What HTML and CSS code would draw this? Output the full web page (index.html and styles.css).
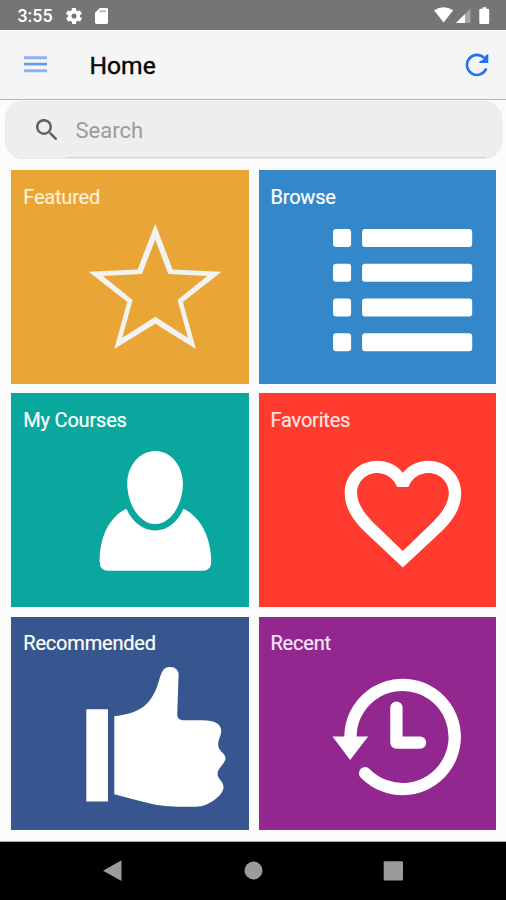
FILE: index.html
```html
<!DOCTYPE html>
<html lang="en">
<head>
<meta charset="utf-8">
<title>Home</title>
<link rel="stylesheet" href="styles.css">
</head>
<body>
<div class="status">
  <span class="time">3:55</span>
  <svg class="gear" viewBox="2 2 20 20"><path fill-rule="evenodd" d="M19.4 13a7 7 0 0 0 0-2l2.1-1.6a.5.5 0 0 0 .1-.7l-2-3.4a.5.5 0 0 0-.6-.2l-2.5 1a7 7 0 0 0-1.7-1l-.4-2.6a.5.5 0 0 0-.5-.5h-4a.5.5 0 0 0-.5.5L9 5.100a7 7 0 0 0-1.700 1l-2.500-1a.5.5 0 0 0-.6.200l-2 3.400a.5.5 0 0 0 .1.700L4.600 11a7 7 0 0 0 0 2l-2.100 1.600a.5.5 0 0 0-.1.700l2 3.400a.5.5 0 0 0 .6.200l2.500-1a7 7 0 0 0 1.700 1l.4 2.600a.5.5 0 0 0 .5.500h4a.5.5 0 0 0 .5-.5l.4-2.600a7 7 0 0 0 1.700-1l2.500 1a.5.5 0 0 0 .6-.2l2-3.400a.5.5 0 0 0-.1-.7zM12 15.200a3.200 3.200 0 1 1 0-6.400 3.200 3.200 0 0 1 0 6.400z"/></svg>
  <svg class="card" viewBox="0 0 13 16"><path d="M4.800 0H11.600Q13 0 13 1.400V14.600Q13 16 11.600 16H1.400Q0 16 0 14.600V4.800z"/><path fill="#c4c4c4" d="M4.500 2h6.500v2.300h-6.500z"/></svg>
  <svg class="signals" viewBox="0 0 56 17">
    <path d="M0 3.300Q9.600-3 19.200 3.300L9.600 15.500z"/>
    <path opacity=".35" d="M36.500 1.500V16H22z"/>
    <path d="M31 7V16H22z"/>
    <path d="M47.500 1.700h1.200V.3h3.600v1.400h1.700q1.200 0 1.200 1.200v12.900q0 1.200-1.200 1.200h-7.500q-1.200 0-1.200-1.200V2.900q0-1.200 1.200-1.200z"/>
  </svg>
</div>
<header class="bar">
  <svg class="menu" viewBox="0 0 23 17"><path fill="#8eb2f4" d="M0 .2h23v3H0zM0 13.300h23v3H0z"/><path fill="#5c9cf0" d="M0 6.800h23v2.600H0z"/></svg>
  <h1>Home</h1>
  <svg class="refresh" viewBox="0 0 24 24"><path fill="none" stroke="#236ff5" stroke-width="2.600" d="M21.300 15.500A10 10 0 1 1 19.300 5.100"/><path fill="#236ff5" d="M23.300 1v9H14.300V8.400L18.500 6.500 20.500 2.500z"/></svg>
</header>
<main>
  <div class="search">
    <svg class="lens" viewBox="3 3 17.500 17.500"><path d="M15.500 14h-.8l-.3-.3A6.500 6.500 0 1 0 13.700 14.400l.3.3v.8l5 5 1.500-1.500zm-6 0a4.500 4.500 0 1 1 0-9 4.500 4.500 0 0 1 0 9z"/></svg>
    <span class="hint">Search</span>
  </div>
  <div class="tiles">
    <a class="tile featured"><span>Featured</span>
      <svg viewBox="34 16 712 640"><path fill="#f2f2f2" fill-rule="evenodd" d="M467 177L519 314 666 321 550 412 589 553 467 477 344 553 383 412 267 321 414 314zM467 224L427 328 310 334 399 406 368 519 467 456 565 519 534 406 623 334 506 328z"/></svg></a>
    <a class="tile browse"><span>Browse</span>
      <svg viewBox="17 16 711 640"><g fill="#fff"><rect x="239" y="193" width="54" height="54" rx="9"/><rect x="326" y="193" width="330" height="54" rx="9"/><rect x="239" y="297" width="54" height="54" rx="9"/><rect x="326" y="297" width="330" height="54" rx="9"/><rect x="239" y="401" width="54" height="54" rx="9"/><rect x="326" y="401" width="330" height="54" rx="9"/><rect x="239" y="505" width="54" height="54" rx="9"/><rect x="326" y="505" width="330" height="54" rx="9"/></g></svg></a>
    <a class="tile courses"><span>My Courses</span>
      <svg viewBox="33 15 712 640"><path fill="#fff" d="M466 189C513 189 549 233 549 287C549 348 513 408 466 408S382 348 382 287C382 233 419 189 466 189zM379 362C398 402 428 427 466 427S532 402 551 362C605 388 634 453 634 520Q634 548 608 548H325Q299 548 299 520C299 451 325 388 379 362z"/></svg></a>
    <a class="tile favorites"><span>Favorites</span>
      <svg viewBox="18 16 711 640"><path fill="#fff" fill-rule="evenodd" d="M449 255C468 231 497 219 526 219C580 219 624 262 624 315C624 360 602 394 567 429L449 539 332 429C297 393 275 360 275 315C275 262 318 219 372 219C402 219 431 231 449 255zM432 298C421 271 398 256 372 256C338 256 312 283 312 316C312 346 332 374 358 402L449 490 540 402C567 374 587 346 587 316C587 283 560 256 526 256C499 256 476 271 466 298z"/></svg></a>
    <a class="tile recommended"><span>Recommended</span>
      <svg viewBox="33 14 712 641"><path fill="#fff" d="M259 291H324V568H259zM343 312C410 305 446 285 468 232C477 209 480 192 486 180Q493 164 511 164Q536 165 536 188L532 307Q532 324 550 324H607C646 324 665 336 664 356C663 375 654 382 655 398C656 418 677 422 677 438C677 453 653 468 653 485C653 499 671 507 671 525C671 549 628 578 603 582C577 586 500 584 463 577Q410 564 343 546z"/></svg></a>
    <a class="tile recent"><span>Recent</span>
      <svg viewBox="18 15 711 641"><path fill="none" stroke="#fff" stroke-width="37" stroke-linecap="round" stroke-linejoin="round" d="M292 385V374A156.500 156.500 0 1 1 336 484M430 287V392H501"/><path fill="#fff" d="M238 374H345L291 444z"/></svg></a>
  </div>
</main>
<nav>
  <svg viewBox="0 0 506 58"><g fill="#9b9b9b"><path d="M103 28.700L121.500 18.300V39z"/><circle cx="253.500" cy="28.500" r="9"/><rect x="383.700" y="19.300" width="19.300" height="19.300" rx="1"/></g></svg>
</nav>
</body>
</html>
```
FILE: styles.css
```css
* { box-sizing: border-box; }
body {
  margin: 0;
  width: 506px;
  height: 900px;
  overflow: hidden;
  display: flex;
  flex-direction: column;
  background: #fbfbfb;
  font-family: Roboto, "Liberation Sans", sans-serif;
}
svg { display: block; flex: none; }
.status {
  height: 30px;
  flex: none;
  display: flex;
  align-items: center;
  padding: 1px 16.500px 0 17.500px;
  background: #757575;
  color: #fff;
  fill: #fff;
}
.time { width: 48.500px; font-size: 17.800px; font-weight: 500; line-height: 30px; }
.gear { width: 16px; height: 16px; }
.card { width: 13px; height: 16px; margin-left: 13px; }
.signals { width: 56px; height: 17px; margin-left: auto; }
.bar {
  height: 70px;
  flex: none;
  display: flex;
  align-items: center;
  padding: 0 17px 0 23.500px;
  background: #f5f5f5;
  border-top: 1px solid #fff;
  border-bottom: 1.500px solid #b2b2b2;
}
.menu { width: 23px; height: 17px; margin-top: -1px; }
h1 { margin: 2px 0 0 43px; font-size: 24.600px; font-weight: 400; line-height: 30px; color: #050505; -webkit-text-stroke: .4px #050505; }
.refresh { width: 24px; height: 24px; margin: -1px 0 0 auto; }
main { height: 742px; flex: none; border-bottom: 1px solid #aaa; }
.search {
  height: 58px;
  margin: 1px 4px 0 5px;
  display: flex;
  align-items: center;
  padding-left: 29.500px;
  border-radius: 18px;
  border: 1px solid #e8e8e8;
  background: linear-gradient(#d6d6d6, #d6d6d6) 60px 100% / 420px 1px no-repeat #eee;
}
.lens { width: 21.500px; height: 21.500px; margin-top: -1px; fill: #606060; }
.hint { margin: 2px 0 0 18.500px; font-size: 22px; line-height: 28px; color: #9b9b9b; }
.tiles {
  margin: 11.300px 10.300px 0 11.300px;
  display: grid;
  grid-template-columns: 1fr 1fr;
  grid-auto-rows: 213.500px;
  gap: 9.700px 10px;
}
.tile { display: grid; color: #fff; }
.tile span { grid-area: 1 / 1; padding: 12.500px 12px; font-size: 20px; letter-spacing: -.2px; line-height: 28px; -webkit-text-stroke: .2px currentColor; }
.tile svg { grid-area: 1 / 1; width: 100%; height: 100%; }
.featured { background: #e9a536; color: #fff0d2; }
.browse { background: #3488c9; }
.courses { background: #09a79d; }
.favorites { background: #ff3b30; color: #ffe6e2; }
.recommended { background: #37568f; }
.recent { background: #92278f; color: #fbe8fb; }
nav { height: 58px; flex: none; background: #000; }
nav svg { width: 506px; height: 58px; }
```
